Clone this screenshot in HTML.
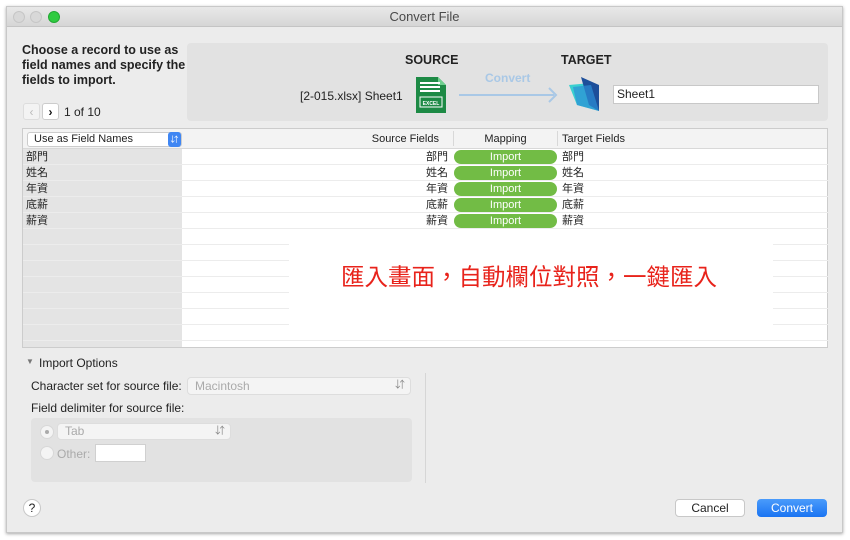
<!DOCTYPE html>
<html><head><meta charset="utf-8"><style>
*{margin:0;padding:0;box-sizing:border-box}
body{width:850px;height:540px;background:#fff;position:relative;overflow:hidden;font-family:"Liberation Sans","Noto Sans CJK TC",sans-serif;font-size:12px;color:#222}
.a{position:absolute}
.win{left:6px;top:6px;width:837px;height:527px;background:#ececec;border:1px solid #c8c8c8;box-shadow:0 1px 3px rgba(0,0,0,.35)}
.tb{left:0;top:0;width:835px;height:20px;background:linear-gradient(#e8e8e8,#d6d6d6);border-bottom:1px solid #c4c4c4;text-align:center;line-height:20px;font-size:13px;color:#4a4a4a}
.dot{top:4px;width:12px;height:12px;border-radius:50%}
.row{left:0;width:805px;height:16px;border-bottom:1px solid #ececec}
.lc{position:absolute;left:0;top:0;width:159px;height:15px;background:#e4e4e4;padding-left:3px;font-size:11px;line-height:16px}
.sf{position:absolute;left:160px;width:265px;text-align:right;font-size:11px;line-height:16px}
.imp{position:absolute;left:431px;top:1px;width:103px;height:14px;border-radius:7px;background:#72bc45;color:#fff;text-align:center;font-size:11px;line-height:14px}
.tf{position:absolute;left:539px;font-size:11px;line-height:16px}
.pop{background:#f4f4f4;border:1px solid #ddd;border-radius:4px;color:#aaa}
</style></head><body>
<div class="a win">
 <div class="a tb">Convert File</div>
 <div class="a dot" style="left:6px;background:#d8d8d8;border:1px solid #c6c6c6"></div>
 <div class="a dot" style="left:23px;background:#d8d8d8;border:1px solid #c6c6c6"></div>
 <div class="a dot" style="left:41px;background:#2fcb40;border:1px solid #22a833"></div>
</div>
<div class="a" style="left:22px;top:43px;font-weight:bold;font-size:12.5px;line-height:15px;width:165px">Choose a record to use as field names and specify the fields to import.</div>
<div class="a" style="left:23px;top:103px;width:17px;height:17px;background:#f3f3f3;border:1px solid #ddd;border-radius:3px;color:#bbb;text-align:center;line-height:16px">&lsaquo;</div>
<div class="a" style="left:42px;top:103px;width:17px;height:17px;background:#fff;border:1px solid #ccc;border-radius:3px;color:#111;text-align:center;line-height:16px;font-weight:bold">&rsaquo;</div>
<div class="a" style="left:64px;top:105px;font-size:12px">1 of 10</div>
<div class="a" style="left:187px;top:43px;width:641px;height:78px;background:#e2e2e2;border-radius:4px"></div>
<div class="a" style="left:405px;top:53px;font-weight:bold;font-size:12.5px">SOURCE</div>
<div class="a" style="left:561px;top:53px;font-weight:bold;font-size:12.5px">TARGET</div>
<div class="a" style="left:300px;top:89px;font-size:12px">[2-015.xlsx] Sheet1</div>
<svg class="a" style="left:415px;top:76px" width="32" height="38"><path d="M1 1h22l8 8v28H1z" fill="#1d8a45"/><path d="M23 1v8h8z" fill="#6fcf8f"/><g fill="#fff"><rect x="5" y="6" width="20" height="2"/><rect x="5" y="10" width="20" height="2"/><rect x="5" y="14" width="20" height="2"/><rect x="5" y="21" width="22" height="10" fill="none" stroke="#fff"/></g><text x="16" y="29" font-size="5" fill="#fff" text-anchor="middle" font-family="Liberation Sans" font-weight="bold">EXCEL</text></svg>
<div class="a" style="left:485px;top:71px;color:#a9c8e6;font-weight:bold;font-size:12px">Convert</div>
<div class="a" style="left:459px;top:94px;width:95px;height:2px;background:#a9c8e6"></div>
<svg class="a" style="left:548px;top:87px" width="10" height="16"><path d="M1 1l7 7-7 7" stroke="#a9c8e6" stroke-width="2" fill="none"/></svg>
<svg class="a" style="left:567px;top:75px" width="36" height="38"><path d="M2 10l22-2 8 28L10 30z" fill="#3ad0d0"/><path d="M14 2l18 8v26L22 30z" fill="#1d4f9a"/><path d="M6 12l18-2 8 26-22-6z" fill="#2c8fd6" opacity=".7"/></svg>
<div class="a" style="left:613px;top:85px;width:206px;height:19px;background:#fff;border:1px solid #c8c8c8;font-size:12px;line-height:17px;padding-left:3px">Sheet1</div>
<div class="a" style="left:22px;top:128px;width:806px;height:220px;background:#fff;border:1px solid #ccc">
 <div class="a" style="left:0;top:0;width:804px;height:20px;background:#f3f3f3;border-bottom:1px solid #d8d8d8"></div>
 <div class="a" style="left:4px;top:3px;width:155px;height:15px;background:#fff;border:1px solid #ccc;border-radius:3px;font-size:11px;line-height:13px;padding-left:6px">Use as Field Names</div>
 <div class="a" style="left:145px;top:3px;width:13px;height:15px;background:#3f86f3;border-radius:3px;color:#fff;font-size:8px;text-align:center;line-height:15px">&#8693;</div>
 <div class="a" style="left:160px;top:4px;width:256px;text-align:right;font-size:11px">Source Fields</div>
 <div class="a" style="left:430px;top:2px;width:1px;height:15px;background:#d8d8d8"></div>
 <div class="a" style="left:430px;top:4px;width:105px;text-align:center;font-size:11px">Mapping</div>
 <div class="a" style="left:534px;top:2px;width:1px;height:15px;background:#d8d8d8"></div>
 <div class="a" style="left:539px;top:4px;font-size:11px">Target Fields</div>
 <div class="a" style="left:0;top:20px;width:159px;height:198px;background:#e4e4e4"></div>
 <div class="a row" style="top:20px"><div class="lc">部門</div><div class="sf">部門</div><div class="imp">Import</div><div class="tf">部門</div></div>
 <div class="a row" style="top:36px"><div class="lc">姓名</div><div class="sf">姓名</div><div class="imp">Import</div><div class="tf">姓名</div></div>
 <div class="a row" style="top:52px"><div class="lc">年資</div><div class="sf">年資</div><div class="imp">Import</div><div class="tf">年資</div></div>
 <div class="a row" style="top:68px"><div class="lc">底薪</div><div class="sf">底薪</div><div class="imp">Import</div><div class="tf">底薪</div></div>
 <div class="a row" style="top:84px"><div class="lc">薪資</div><div class="sf">薪資</div><div class="imp">Import</div><div class="tf">薪資</div></div>
 <div class="a row" style="top:100px"></div><div class="a row" style="top:116px"></div><div class="a row" style="top:132px"></div><div class="a row" style="top:148px"></div><div class="a row" style="top:164px"></div><div class="a row" style="top:180px"></div><div class="a row" style="top:196px"></div>
 <div class="a" style="left:266px;top:112px;width:484px;height:85px;background:#fff"></div>
 <div class="a" style="left:318px;top:133px;color:#e8231b;font-size:23.5px;line-height:30px;white-space:nowrap;letter-spacing:0">匯入畫面，自動欄位對照，一鍵匯入</div>
</div>
<div class="a" style="left:26px;top:357px;font-size:8px;color:#777">&#9660;</div>
<div class="a" style="left:39px;top:356px;font-size:12px">Import Options</div>
<div class="a" style="left:425px;top:373px;width:1px;height:110px;background:#d6d6d6"></div>
<div class="a" style="left:31px;top:379px;font-size:12px">Character set for source file:</div>
<div class="a pop" style="left:187px;top:377px;width:224px;height:18px;font-size:12px;line-height:16px;padding-left:7px">Macintosh<span style="position:absolute;right:5px;top:0;color:#888;font-size:10px">&#8693;</span></div>
<div class="a" style="left:31px;top:401px;font-size:12px">Field delimiter for source file:</div>
<div class="a" style="left:31px;top:418px;width:381px;height:64px;background:#e2e2e2;border-radius:4px"></div>
<div class="a" style="left:40px;top:425px;width:14px;height:14px;border-radius:50%;background:#f4f4f4;border:1px solid #d8d8d8"></div>
<div class="a" style="left:45px;top:430px;width:4px;height:4px;border-radius:50%;background:#aaa"></div>
<div class="a pop" style="left:57px;top:423px;width:174px;height:17px;font-size:12px;line-height:15px;padding-left:7px">Tab<span style="position:absolute;right:5px;top:0;color:#888;font-size:10px">&#8693;</span></div>
<div class="a" style="left:40px;top:446px;width:14px;height:14px;border-radius:50%;background:#f4f4f4;border:1px solid #d8d8d8"></div>
<div class="a" style="left:57px;top:447px;font-size:12px;color:#aaa">Other:</div>
<div class="a" style="left:95px;top:444px;width:51px;height:18px;background:#fff;border:1px solid #d0d0d0"></div>
<div class="a" style="left:23px;top:499px;width:18px;height:18px;border-radius:50%;background:#fff;border:1px solid #c8c8c8;text-align:center;line-height:16px;font-size:12px">?</div>
<div class="a" style="left:675px;top:499px;width:70px;height:18px;background:#fff;border:1px solid #c8c8c8;border-radius:4px;text-align:center;line-height:16px;font-size:12px">Cancel</div>
<div class="a" style="left:757px;top:499px;width:70px;height:18px;background:linear-gradient(#4a9bfb,#1a74f2);border-radius:4px;text-align:center;line-height:18px;font-size:12px;color:#fff">Convert</div>
</body></html>
